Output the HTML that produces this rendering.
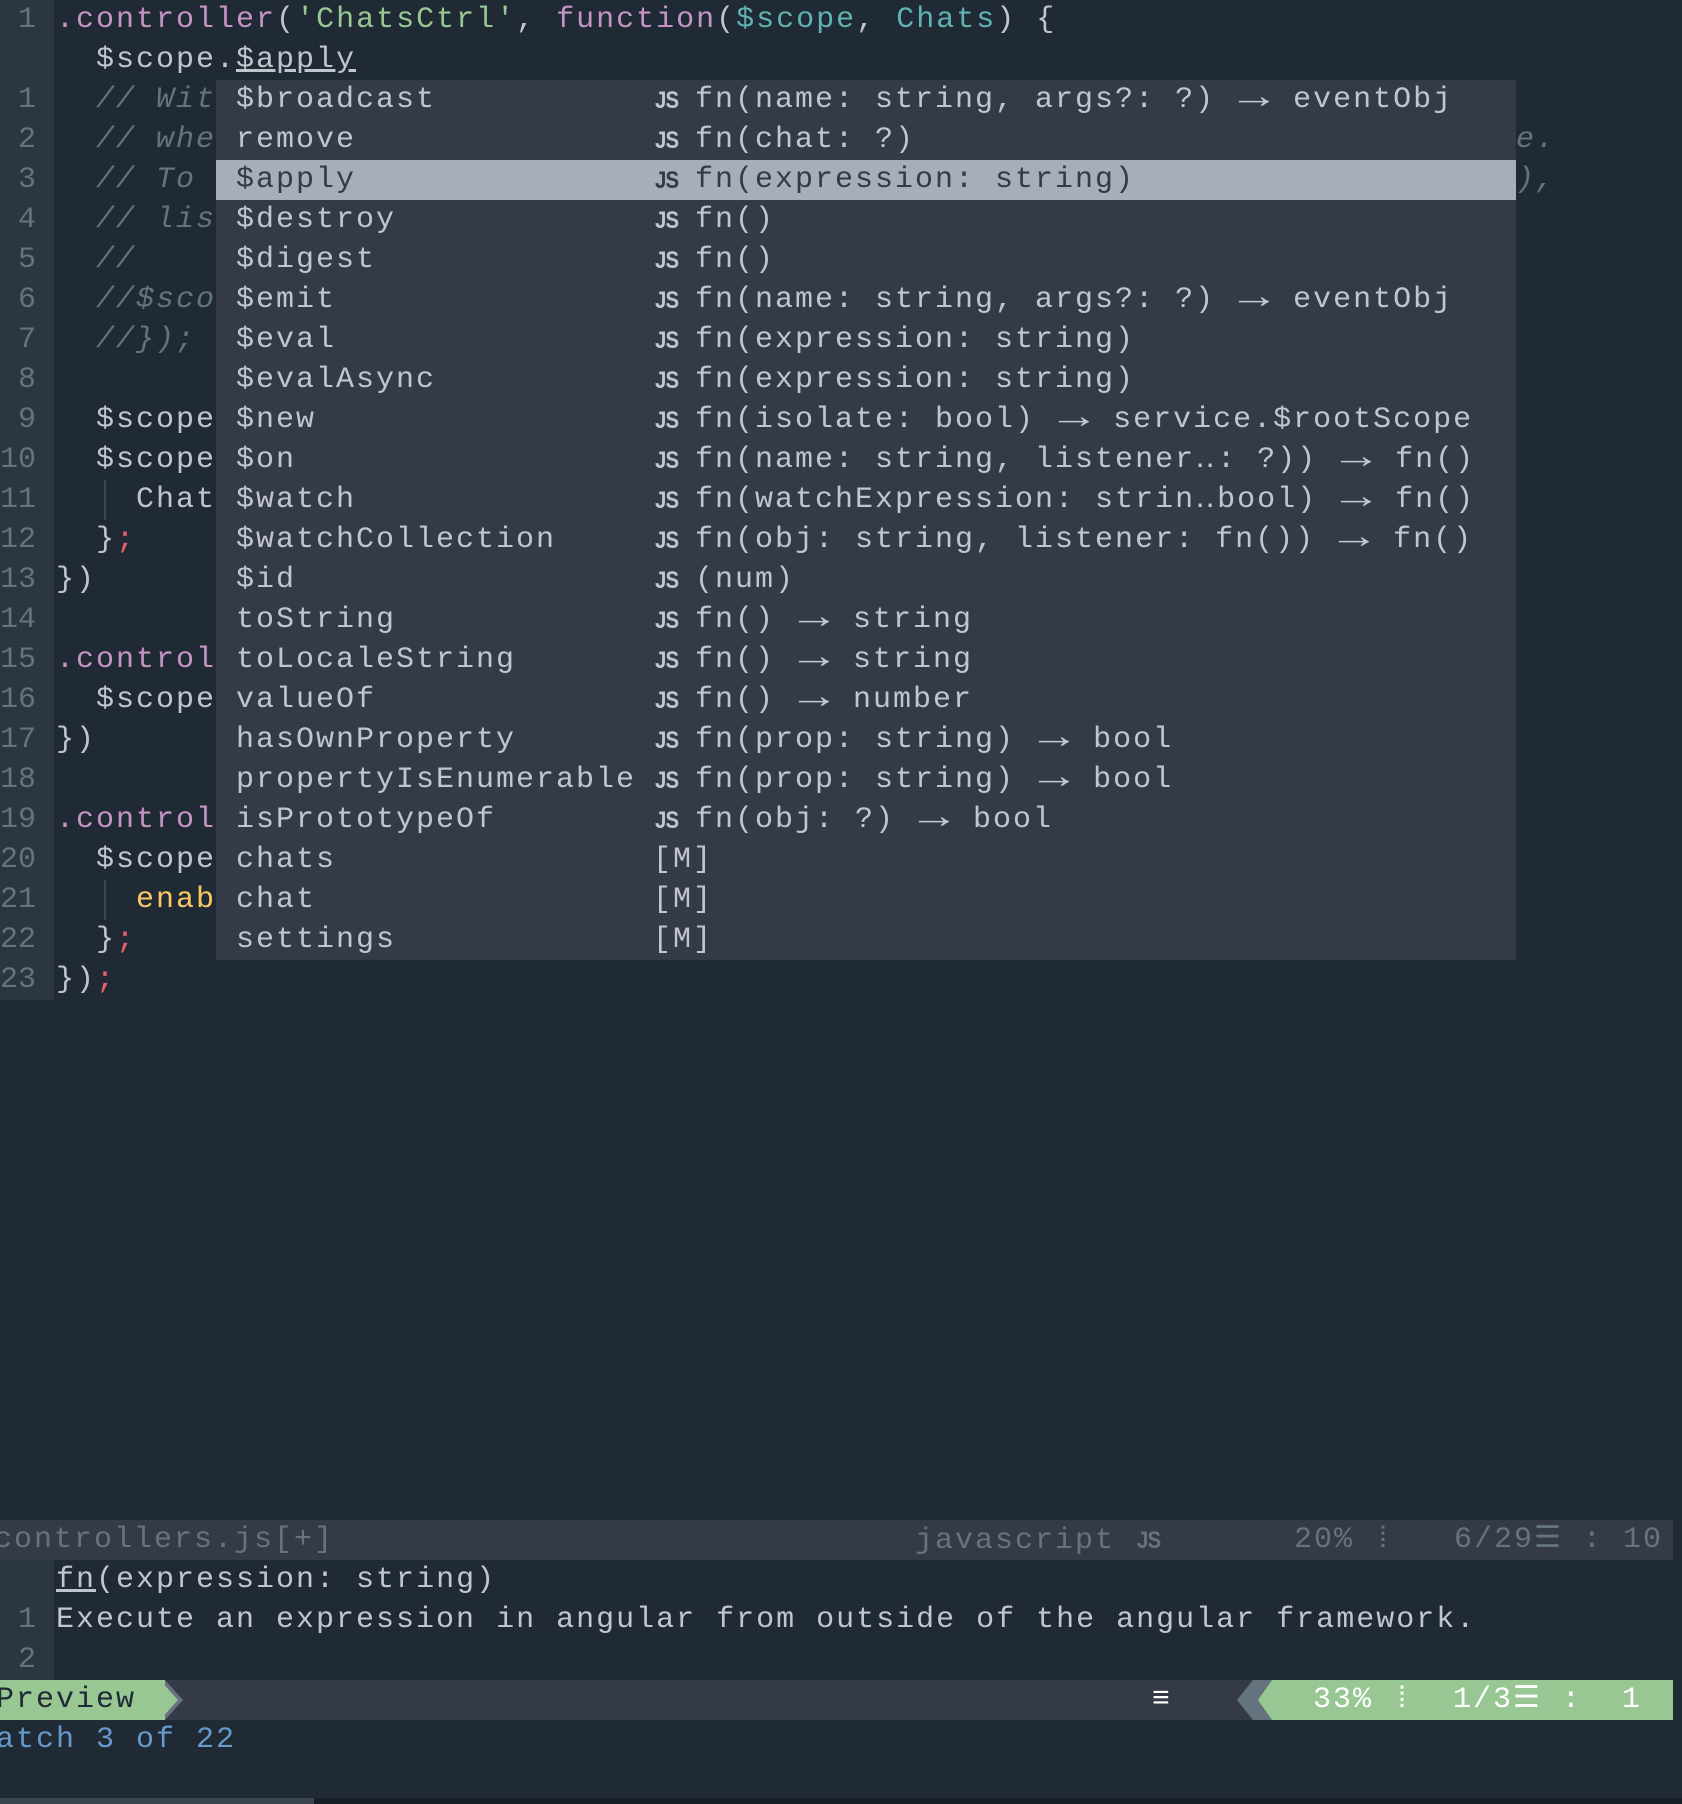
<!DOCTYPE html>
<html><head><meta charset="utf-8"><style>
*{margin:0;padding:0;box-sizing:border-box}
body{width:1682px;height:1804px;background:#1f2a35;overflow:hidden;position:relative;font-family:"Liberation Mono",monospace;font-size:30px;letter-spacing:2px;color:#c0c5ce}
.r{position:absolute;height:40px;line-height:41px;white-space:pre}
.g{position:absolute;left:0;width:54px;background:#2b3640}
.n{position:absolute;left:0;width:36px;text-align:right;color:#65737e;height:40px;line-height:41px;letter-spacing:0}
.pk{color:#c594c5}.gr{color:#99c794}.tl{color:#5fb3b3}.rd{color:#ec5f67}.yl{color:#fac863}.cm{color:#65737e;font-style:italic}
.pop{position:absolute;left:216px;top:80px;width:1300px;height:880px;background:#343b46}
.sel{background:#a7adba;color:#343b46}
.js{font-family:"Liberation Sans",sans-serif;font-weight:bold;font-size:24px;letter-spacing:-1px;display:inline-block;transform:scaleX(.85)}
.a{display:inline-block;width:38px;text-align:center;transform:scale(1.7,1.2);transform-origin:50% 60%;letter-spacing:0}
</style></head><body>
<div class="g" style="top:0;height:1000px"></div>
<div class="g" style="top:1560px;height:120px"></div>
<div class="n" style="top:0">1</div>
<div class="n" style="top:80px">1</div><div class="n" style="top:120px">2</div><div class="n" style="top:160px">3</div><div class="n" style="top:200px">4</div><div class="n" style="top:240px">5</div><div class="n" style="top:280px">6</div><div class="n" style="top:320px">7</div><div class="n" style="top:360px">8</div><div class="n" style="top:400px">9</div><div class="n" style="top:440px">10</div><div class="n" style="top:480px">11</div><div class="n" style="top:520px">12</div><div class="n" style="top:560px">13</div><div class="n" style="top:600px">14</div><div class="n" style="top:640px">15</div><div class="n" style="top:680px">16</div><div class="n" style="top:720px">17</div><div class="n" style="top:760px">18</div><div class="n" style="top:800px">19</div><div class="n" style="top:840px">20</div><div class="n" style="top:880px">21</div><div class="n" style="top:920px">22</div><div class="n" style="top:960px">23</div>

<div class="r" style="left:56px;top:0"><span class="pk">.controller</span>(<span class="gr">'ChatsCtrl'</span>, <span class="pk">function</span>(<span class="tl">$scope</span>, <span class="tl">Chats</span>) {</div>
<div class="r" style="left:56px;top:40px">  $scope.<u>$apply</u></div>
<div class="r cm" style="left:56px;top:80px">  // Wit</div>
<div class="r cm" style="left:56px;top:120px">  // whe</div>
<div class="r cm" style="left:56px;top:160px">  // To </div>
<div class="r cm" style="left:56px;top:200px">  // lis</div>
<div class="r cm" style="left:56px;top:240px">  //</div>
<div class="r cm" style="left:56px;top:280px">  //$sco</div>
<div class="r cm" style="left:56px;top:320px">  //});</div>
<div class="r" style="left:56px;top:400px">  $scope</div>
<div class="r" style="left:56px;top:440px">  $scope</div>
<div class="r" style="left:56px;top:480px">    Chat</div>
<div class="r" style="left:56px;top:520px">  }<span class="rd">;</span></div>
<div class="r" style="left:56px;top:560px">})</div>
<div class="r" style="left:56px;top:640px"><span class="pk">.control</span></div>
<div class="r" style="left:56px;top:680px">  $scope</div>
<div class="r" style="left:56px;top:720px">})</div>
<div class="r" style="left:56px;top:800px"><span class="pk">.control</span></div>
<div class="r" style="left:56px;top:840px">  $scope</div>
<div class="r" style="left:56px;top:880px">    <span class="yl">enab</span></div>
<div class="r" style="left:56px;top:920px">  }<span class="rd">;</span></div>
<div class="r" style="left:56px;top:960px">})<span class="rd">;</span></div>
<div style="position:absolute;left:104px;top:480px;width:2px;height:40px;background:#3b4651"></div>
<div style="position:absolute;left:104px;top:880px;width:2px;height:40px;background:#3b4651"></div>
<div class="r cm" style="left:1516px;top:120px">e.</div>
<div class="r cm" style="left:1516px;top:160px">),</div>

<div class="pop">
<div class="r" style="left:20px;top:0">$broadcast</div>
<div class="r" style="left:20px;top:40px">remove</div>
<div class="r sel" style="left:0;top:80px;width:1300px"></div>
<div class="r" style="left:20px;top:80px;color:#343b46">$apply</div>
<div class="r" style="left:20px;top:120px">$destroy</div>
<div class="r" style="left:20px;top:160px">$digest</div>
<div class="r" style="left:20px;top:200px">$emit</div>
<div class="r" style="left:20px;top:240px">$eval</div>
<div class="r" style="left:20px;top:280px">$evalAsync</div>
<div class="r" style="left:20px;top:320px">$new</div>
<div class="r" style="left:20px;top:360px">$on</div>
<div class="r" style="left:20px;top:400px">$watch</div>
<div class="r" style="left:20px;top:440px">$watchCollection</div>
<div class="r" style="left:20px;top:480px">$id</div>
<div class="r" style="left:20px;top:520px">toString</div>
<div class="r" style="left:20px;top:560px">toLocaleString</div>
<div class="r" style="left:20px;top:600px">valueOf</div>
<div class="r" style="left:20px;top:640px">hasOwnProperty</div>
<div class="r" style="left:20px;top:680px">propertyIsEnumerable</div>
<div class="r" style="left:20px;top:720px">isPrototypeOf</div>
<div class="r" style="left:20px;top:760px">chats</div>
<div class="r" style="left:20px;top:800px">chat</div>
<div class="r" style="left:20px;top:840px">settings</div>

<div class="r" style="left:437px;top:0"><span class="js">JS</span></div>
<div class="r" style="left:437px;top:40px"><span class="js">JS</span></div>
<div class="r" style="left:437px;top:80px;color:#343b46"><span class="js">JS</span></div>
<div class="r" style="left:437px;top:120px"><span class="js">JS</span></div>
<div class="r" style="left:437px;top:160px"><span class="js">JS</span></div>
<div class="r" style="left:437px;top:200px"><span class="js">JS</span></div>
<div class="r" style="left:437px;top:240px"><span class="js">JS</span></div>
<div class="r" style="left:437px;top:280px"><span class="js">JS</span></div>
<div class="r" style="left:437px;top:320px"><span class="js">JS</span></div>
<div class="r" style="left:437px;top:360px"><span class="js">JS</span></div>
<div class="r" style="left:437px;top:400px"><span class="js">JS</span></div>
<div class="r" style="left:437px;top:440px"><span class="js">JS</span></div>
<div class="r" style="left:437px;top:480px"><span class="js">JS</span></div>
<div class="r" style="left:437px;top:520px"><span class="js">JS</span></div>
<div class="r" style="left:437px;top:560px"><span class="js">JS</span></div>
<div class="r" style="left:437px;top:600px"><span class="js">JS</span></div>
<div class="r" style="left:437px;top:640px"><span class="js">JS</span></div>
<div class="r" style="left:437px;top:680px"><span class="js">JS</span></div>
<div class="r" style="left:437px;top:720px"><span class="js">JS</span></div>

<div class="r" style="left:479px;top:0">fn(name: string, args?: ?) <span class="a">→</span> eventObj</div>
<div class="r" style="left:479px;top:40px">fn(chat: ?)</div>
<div class="r" style="left:479px;top:80px;color:#343b46">fn(expression: string)</div>
<div class="r" style="left:479px;top:120px">fn()</div>
<div class="r" style="left:479px;top:160px">fn()</div>
<div class="r" style="left:479px;top:200px">fn(name: string, args?: ?) <span class="a">→</span> eventObj</div>
<div class="r" style="left:479px;top:240px">fn(expression: string)</div>
<div class="r" style="left:479px;top:280px">fn(expression: string)</div>
<div class="r" style="left:479px;top:320px">fn(isolate: bool) <span class="a">→</span> service.$rootScope</div>
<div class="r" style="left:479px;top:360px">fn(name: string, listener‥: ?)) <span class="a">→</span> fn()</div>
<div class="r" style="left:479px;top:400px">fn(watchExpression: strin‥bool) <span class="a">→</span> fn()</div>
<div class="r" style="left:479px;top:440px">fn(obj: string, listener: fn()) <span class="a">→</span> fn()</div>
<div class="r" style="left:479px;top:480px">(num)</div>
<div class="r" style="left:479px;top:520px">fn() <span class="a">→</span> string</div>
<div class="r" style="left:479px;top:560px">fn() <span class="a">→</span> string</div>
<div class="r" style="left:479px;top:600px">fn() <span class="a">→</span> number</div>
<div class="r" style="left:479px;top:640px">fn(prop: string) <span class="a">→</span> bool</div>
<div class="r" style="left:479px;top:680px">fn(prop: string) <span class="a">→</span> bool</div>
<div class="r" style="left:479px;top:720px">fn(obj: ?) <span class="a">→</span> bool</div>
<div class="r" style="left:437px;top:760px">[M]</div>
<div class="r" style="left:437px;top:800px">[M]</div>
<div class="r" style="left:437px;top:840px">[M]</div>
</div>

<div style="position:absolute;left:0;top:1520px;width:1673px;height:40px;background:#343b46"></div>
<div class="r" style="left:-6px;top:1520px;color:#65737e">controllers.js[+]</div>
<div class="r" style="left:915px;top:1520px;color:#65737e">javascript <span class="js">JS</span></div>
<div class="r" style="left:1294px;top:1520px;color:#65737e">20% ⁞   6/29☰ : 10</div>

<div class="r" style="left:56px;top:1560px"><u>fn</u>(expression: string)</div>
<div class="n" style="top:1600px">1</div><div class="n" style="top:1640px">2</div>
<div class="r" style="left:56px;top:1600px">Execute an expression in angular from outside of the angular framework.</div>

<div style="position:absolute;left:0;top:1680px;width:1673px;height:40px;background:#343b46"></div>
<div style="position:absolute;left:0;top:1680px;width:165px;height:40px;background:#99c794"></div>
<div style="position:absolute;left:165px;top:1680px;width:0;height:0;border-top:20px solid transparent;border-bottom:20px solid transparent;border-left:18px solid #65737e"></div>
<div style="position:absolute;left:160px;top:1680px;width:0;height:0;border-top:20px solid transparent;border-bottom:20px solid transparent;border-left:18px solid #99c794"></div>
<div class="r" style="left:-4px;top:1680px;color:#1f2a35">Preview</div>
<div class="r" style="left:1152px;top:1680px;color:#fff;font-weight:bold">≡</div>
<div style="position:absolute;left:1237px;top:1680px;width:35px;height:40px;background:#65737e"></div>
<div style="position:absolute;left:1237px;top:1680px;width:0;height:0;border-top:20px solid transparent;border-bottom:20px solid transparent;border-right:16px solid #65737e;background:#343b46"></div>
<div style="position:absolute;left:1258px;top:1680px;width:0;height:0;border-top:20px solid transparent;border-bottom:20px solid transparent;border-right:14px solid #99c794"></div>
<div style="position:absolute;left:1272px;top:1680px;width:401px;height:40px;background:#99c794"></div>
<div class="r" style="left:1313px;top:1680px;color:#fff">33% ⁞  1/3☰ :  1</div>

<div class="r" style="left:-4px;top:1720px;color:#6699cc">atch 3 of 22</div>
<div style="position:absolute;left:0;top:1798px;width:1682px;height:6px;background:#161e26"></div>
<div style="position:absolute;left:0;top:1798px;width:314px;height:6px;background:#3b4651"></div>
</body></html>
